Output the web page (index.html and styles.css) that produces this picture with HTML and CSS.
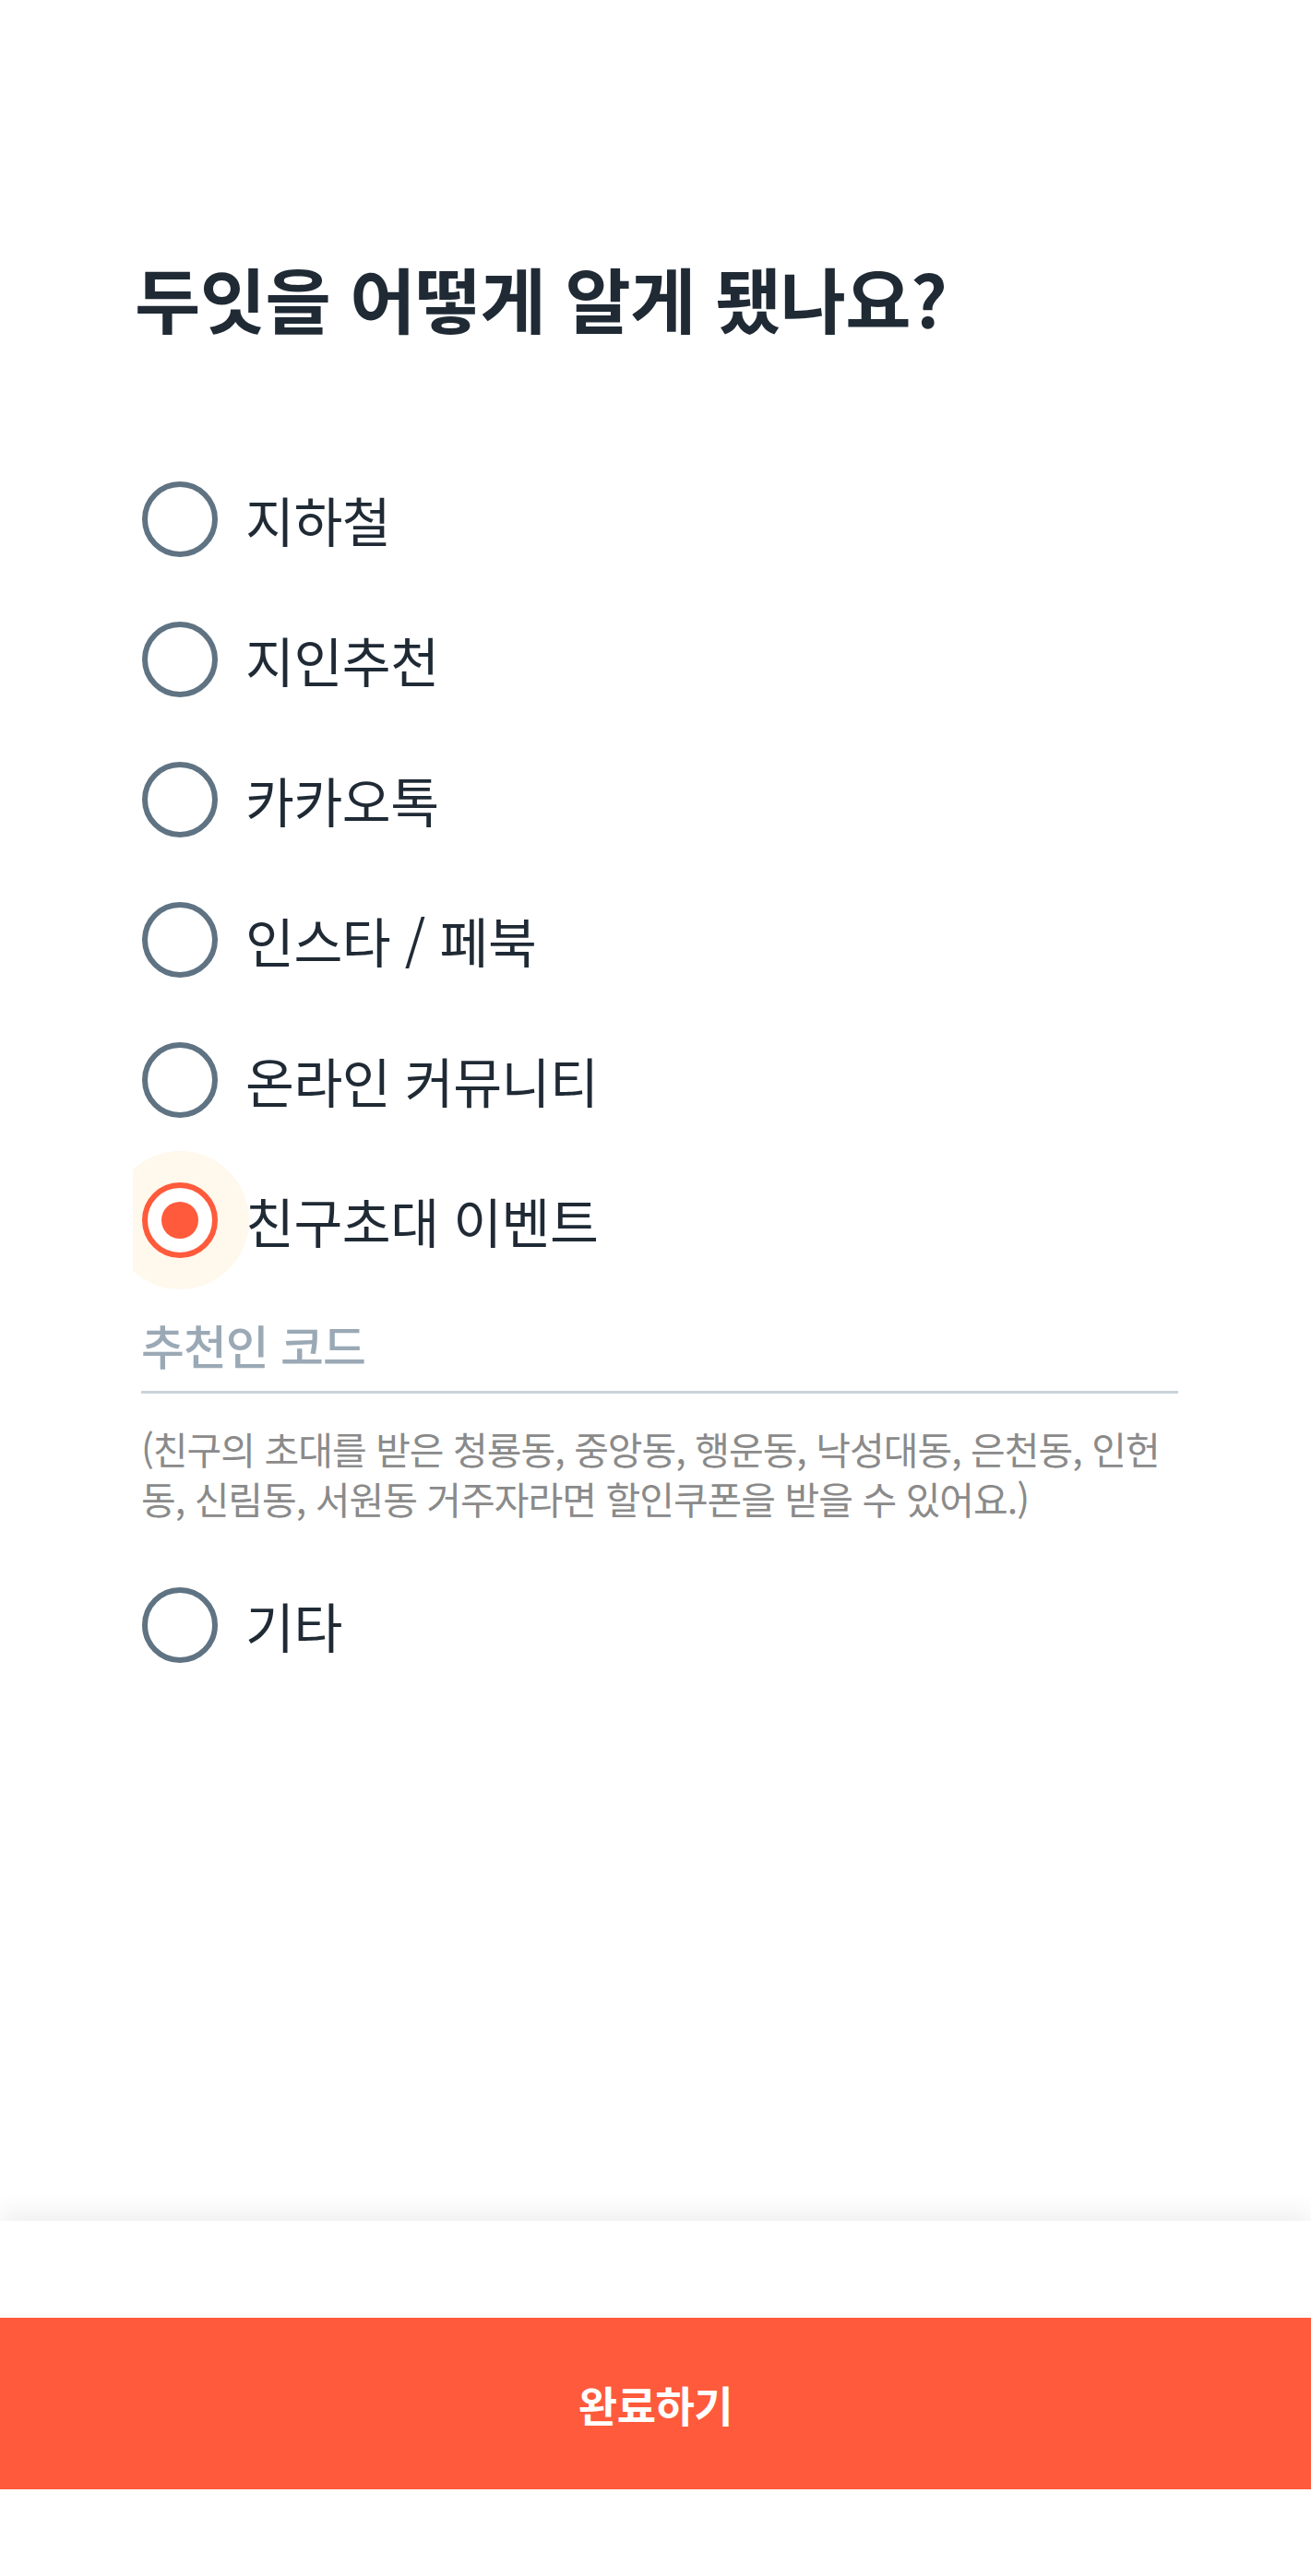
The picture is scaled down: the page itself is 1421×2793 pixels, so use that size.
FILE: index.html
```html
<!DOCTYPE html>
<html lang="ko">
<head>
    <meta charset="UTF-8">
    <meta name="viewport" content="width=device-width, initial-scale=1.0">
    <title>두잇을 어떻게 알게 됐나요?</title>
    <link rel="stylesheet" href="styles.css">
</head>
<body>
    <div class="screen">
        <main class="content">
            <h1 class="title">두잇을 어떻게 알게 됐나요?</h1>

            <div class="option-list">
                <label class="option">
                    <span class="radio"></span>
                    <span class="option-label">지하철</span>
                </label>
                <label class="option">
                    <span class="radio"></span>
                    <span class="option-label">지인추천</span>
                </label>
                <label class="option">
                    <span class="radio"></span>
                    <span class="option-label">카카오톡</span>
                </label>
                <label class="option">
                    <span class="radio"></span>
                    <span class="option-label">인스타 / 페북</span>
                </label>
                <label class="option">
                    <span class="radio"></span>
                    <span class="option-label">온라인 커뮤니티</span>
                </label>

                <div class="option-group">
                    <label class="option checked">
                        <span class="radio"></span>
                        <span class="option-label">친구초대 이벤트</span>
                    </label>
                    <div class="referral">
                        <input class="referral-input" type="text" placeholder="추천인 코드">
                        <p class="referral-help">(친구의 초대를 받은 청룡동, 중앙동, 행운동, 낙성대동, 은천동, 인헌동, 신림동, 서원동 거주자라면 할인쿠폰을 받을 수 있어요.)</p>
                    </div>
                </div>

                <label class="option">
                    <span class="radio"></span>
                    <span class="option-label">기타</span>
                </label>
            </div>
        </main>

        <footer class="footer">
            <button class="submit-btn" type="button">완료하기</button>
        </footer>
    </div>
</body>
</html>
```

FILE: styles.css
```css
* {
    box-sizing: border-box;
}

body {
    margin: 0;
    padding: 0;
    background: #ffffff;
    font-family: "Noto Sans CJK KR", "Noto Sans", sans-serif;
    color: #1f2a35;
}

.screen {
    display: flex;
    flex-direction: column;
    height: 100vh;
}

.content {
    flex: 1;
    padding: 272px 144px 0 144px;
}

.title {
    margin: 0 0 0 2px;
    font-size: 77.5px;
    font-weight: 700;
    line-height: 100px;
    letter-spacing: -0.6px;
    color: #1f2a35;
}

.option-list {
    display: flex;
    flex-direction: column;
    gap: 70px;
    margin-top: 150px;
    overflow: hidden;
}

.option-group {
    display: flex;
    flex-direction: column;
}

.option {
    display: flex;
    align-items: center;
    height: 82px;
}

.radio {
    position: relative;
    flex: none;
    width: 82px;
    height: 82px;
    margin-left: 10px;
    border: 6px solid #5f7383;
    border-radius: 50%;
    background: #ffffff;
}

.option.checked .radio {
    border-color: #ff5a3b;
}

/* soft halo behind the picked radio */
.option.checked .radio::before {
    content: "";
    position: absolute;
    left: 50%;
    top: 50%;
    width: 150px;
    height: 150px;
    margin: -75px 0 0 -75px;
    border-radius: 50%;
    background: #fff8ec;
    z-index: -1;
}

.option.checked .radio::after {
    content: "";
    position: absolute;
    left: 50%;
    top: 50%;
    width: 40px;
    height: 40px;
    margin: -20px 0 0 -20px;
    border-radius: 50%;
    background: #ff5a3b;
}

.option-label {
    margin-left: 30px;
    font-size: 57.5px;
    font-weight: 400;
    letter-spacing: -0.5px;
    color: #1f2a35;
}

.referral {
    padding-left: 9px;
}

.referral-input {
    display: block;
    width: 100%;
    height: 103px;
    margin-top: 44px;
    padding: 0;
    border: none;
    border-bottom: 3px solid #c9d3da;
    outline: none;
    background: transparent;
    font-family: inherit;
    font-size: 51px;
    font-weight: 500;
    letter-spacing: -1px;
    color: #1f2a35;
}

.referral-input::placeholder {
    color: #9aa9b5;
}

.referral-help {
    margin: 32px 0 0 0;
    font-size: 41px;
    line-height: 54px;
    letter-spacing: -1px;
    color: #8a8a8a;
}

.footer {
    flex: none;
    height: 385px;
    padding: 105px 0 94px 0;
    background: #ffffff;
    box-shadow: 0 -12px 24px rgba(0, 0, 0, 0.06);
}

.submit-btn {
    display: block;
    width: 100%;
    height: 186px;
    border: none;
    background: #ff5a3b;
    color: #ffffff;
    font-family: inherit;
    font-size: 46px;
    font-weight: 700;
    letter-spacing: -0.5px;
}
```
